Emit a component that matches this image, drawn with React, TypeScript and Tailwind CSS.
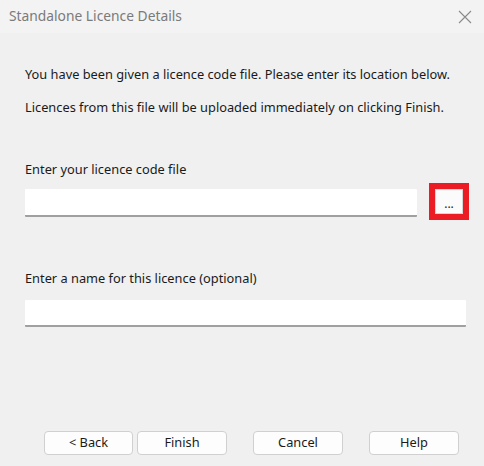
export default function App() {
  const font = { fontFamily: '"Noto Sans", "Open Sans", sans-serif' }
  return (
    <div className="w-[484px] h-[466px] bg-[#f0f0f0] flex flex-col text-[#1a1a1a] overflow-hidden relative" style={font}>
      {/* title bar */}
      <div className="h-[33px] bg-[#f3f3f3] flex items-center justify-between pl-[9px] pr-[11px]">
        <span className="text-[13.8px] text-[#7a7a7a]">Standalone Licence Details</span>
        <svg width="16" height="16" viewBox="0 0 16 16" className="text-[#8a8a8a]">
          <path d="M2 2 L14 14 M14 2 L2 14" stroke="currentColor" strokeWidth="1.1" fill="none" />
        </svg>
      </div>

      <div className="flex flex-col pl-[25px] pr-[15px] pt-[32px] text-[12.8px] leading-[18px]">
        <p>You have been given a licence code file. Please enter its location below.</p>
        <p className="mt-[15px]">Licences from this file will be uploaded immediately on clicking Finish.</p>

        <p className="mt-[44px]">Enter your licence code file</p>
        <div className="mt-[5px] flex items-start">
          <div className="mt-[6px] w-[392px] h-[28px] bg-white border-b-2 border-[#a0a0a0] rounded-[1px]" />
          <div className="ml-[12px] w-[40px] h-[37px] bg-[#ec1c24] p-[6px] flex">
            <button className="flex-1 bg-[#fbfbfb] border border-[#d6d6d6] flex items-end justify-center pb-[3px] text-[12px] leading-[12px] text-[#1a1a1a]">
              ...
            </button>
          </div>
        </div>

        <p className="mt-[49px]">Enter a name for this licence (optional)</p>
        <div className="mt-[13px] w-[441px] h-[27px] bg-white border-b-2 border-[#a0a0a0] rounded-[1px]" />
      </div>

      <div className="mt-auto mb-[11px] flex pl-[44px] text-[12.8px]">
        <button className="w-[89px] h-[24px] bg-[#fdfdfd] border border-[#d0d0d0] rounded-[4px]">&lt; Back</button>
        <button className="ml-[4px] w-[90px] h-[24px] bg-[#fdfdfd] border border-[#d0d0d0] rounded-[4px]">Finish</button>
        <button className="ml-[26px] w-[90px] h-[24px] bg-[#fdfdfd] border border-[#d0d0d0] rounded-[4px]">Cancel</button>
        <button className="ml-[26px] w-[90px] h-[24px] bg-[#fdfdfd] border border-[#d0d0d0] rounded-[4px]">Help</button>
      </div>
    </div>
  )
}
